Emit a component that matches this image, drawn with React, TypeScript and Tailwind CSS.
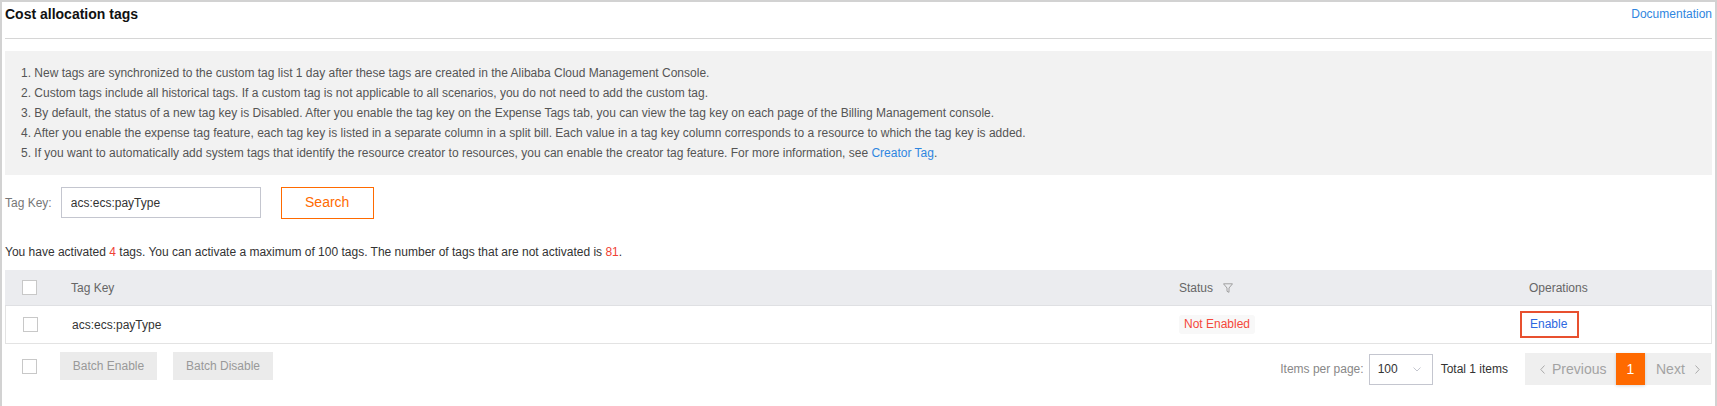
import React from "react";

const Checkbox: React.FC = (): JSX.Element => <span className="block h-[15px] w-[15px] border border-[#c8c8c8] bg-white" />;

const notes = [
  "1. New tags are synchronized to the custom tag list 1 day after these tags are created in the Alibaba Cloud Management Console.",
  "2. Custom tags include all historical tags. If a custom tag is not applicable to all scenarios, you do not need to add the custom tag.",
  "3. By default, the status of a new tag key is Disabled. After you enable the tag key on the Expense Tags tab, you can view the tag key on each page of the Billing Management console.",
  "4. After you enable the expense tag feature, each tag key is listed in a separate column in a split bill. Each value in a tag key column corresponds to a resource to which the tag key is added.",
];

const App: React.FC = (): JSX.Element => {
  return (
    <div className="h-[406px] border-2 border-b-0 border-[#d2d2d2] bg-white px-[3px] font-['Liberation_Sans',Arial,sans-serif] text-[12px] text-[#333]">
      {/* title */}
      <div className="flex h-[37px] items-start justify-between border-b border-[#d6d6d6] pt-[2px]">
        <div className="text-[14px] font-bold leading-[20px] text-[#111]">Cost allocation tags</div>
        <a className="leading-[20px] text-[#2f86e0]">Documentation</a>
      </div>

      {/* notes */}
      <div className="mt-[12px] bg-[#f2f2f2] px-[16px] py-[12px] leading-[20px] text-[#555]">
        {notes.map((n) => (
          <div key={n}>{n}</div>
        ))}
        <div>
          5. If you want to automatically add system tags that identify the resource creator to resources, you can enable the creator tag feature. For more information, see{" "}
          <a className="text-[#2f86e0]">Creator Tag</a>.
        </div>
      </div>

      {/* search */}
      <div className="mt-[12px] flex h-[31px] items-center">
        <span className="text-[#777]">Tag Key:</span>
        <input
          readOnly
          defaultValue="acs:ecs:payType"
          className="ml-[9px] h-[31px] w-[200px] border border-[#c4c6cf] px-[9px] text-[#333] outline-none"
        />
        <button className="ml-[20px] h-[32px] w-[93px] border border-[#ff6a00] text-[14px] text-[#ff6a00]">Search</button>
      </div>

      <div className="mt-[24px] leading-[20px]">
        You have activated <span className="text-[#f04134]">4</span> tags. You can activate a maximum of 100 tags. The number of tags that are not activated is{" "}
        <span className="text-[#f04134]">81</span>.
      </div>

      {/* table */}
      <div className="mt-[8px]">
        <div className="grid h-[36px] grid-cols-[66px_1108px_350px_1fr] items-center border-b border-[#dfe0e3] bg-[#ebecef] text-[#666]">
          <div className="pl-[17px]">
            <Checkbox />
          </div>
          <div>Tag Key</div>
          <div className="flex items-center">
            Status
            <svg className="ml-[10px]" width="10" height="10" viewBox="0 0 10 10" fill="none">
              <path d="M0.5 0.8 H9.5 L6 5 V9.3 L4 8.3 V5 Z" stroke="#999" strokeWidth="0.9" strokeLinejoin="round" />
            </svg>
          </div>
          <div>Operations</div>
        </div>
        <div className="grid h-[38px] grid-cols-[66px_1108px_350px_1fr] items-center border-x border-b border-[#e3e3e3]">
          <div className="pl-[17px]">
            <Checkbox />
          </div>
          <div>acs:ecs:payType</div>
          <div>
            <span className="-ml-[1px] inline-block rounded-[3px] bg-[#f8f8f8] px-[5px] leading-[19px] text-[#f5483b]">Not Enabled</span>
          </div>
          <div>
            <span className="-ml-[10px] inline-block border-2 border-[#e8502f] py-[2px] pl-[8px] pr-[10px] leading-[19px] text-[#2c68e0]">Enable</span>
          </div>
        </div>
      </div>

      {/* footer */}
      <div className="flex items-start justify-between pt-[8px]">
        <div className="flex h-[28px] items-center">
          <div className="ml-[17px]">
            <Checkbox />
          </div>
          <button className="ml-[23px] h-[28px] w-[97px] bg-[#ebebeb] text-[#999]">Batch Enable</button>
          <button className="ml-[16px] h-[28px] w-[100px] bg-[#ebebeb] text-[#999]">Batch Disable</button>
        </div>
        <div className="mt-[1px] flex h-[32px] items-center">
          <span className="text-[#888]">Items per page:</span>
          <div className="ml-[5px] flex h-[31px] w-[64px] items-center border border-[#c4c6cf] pl-[8px] pr-[11px]">
            <span className="text-[#333]">100</span>
            <svg className="ml-auto" width="8" height="5" viewBox="0 0 8 5" fill="none">
              <path d="M0.5 0.5 L4 4 L7.5 0.5" stroke="#c4c6cf" strokeWidth="1" />
            </svg>
          </div>
          <span className="ml-[8px] text-[#333]">Total 1 items</span>
          <div className="ml-[17px] mr-[1px] flex h-[32px] bg-[#efefef] text-[14px] text-[#a3a3a3]">
            <div className="flex w-[91px] items-center pl-[15px]">
              <svg width="5" height="9" viewBox="0 0 5 9" fill="none">
                <path d="M4.5 0.5 L0.8 4.5 L4.5 8.5" stroke="#aaa" strokeWidth="1" />
              </svg>
              <span className="ml-[7px]">Previous</span>
            </div>
            <div className="flex w-[29px] items-center justify-center bg-[#ff6a00] text-white shadow-[0_1px_3px_rgba(0,0,0,0.15)]">1</div>
            <div className="flex w-[66px] items-center pl-[11px]">
              <span>Next</span>
              <svg className="ml-[10px]" width="5" height="9" viewBox="0 0 5 9" fill="none">
                <path d="M0.5 0.5 L4.2 4.5 L0.5 8.5" stroke="#aaa" strokeWidth="1" />
              </svg>
            </div>
          </div>
        </div>
      </div>
    </div>
  );
};

export default App;
